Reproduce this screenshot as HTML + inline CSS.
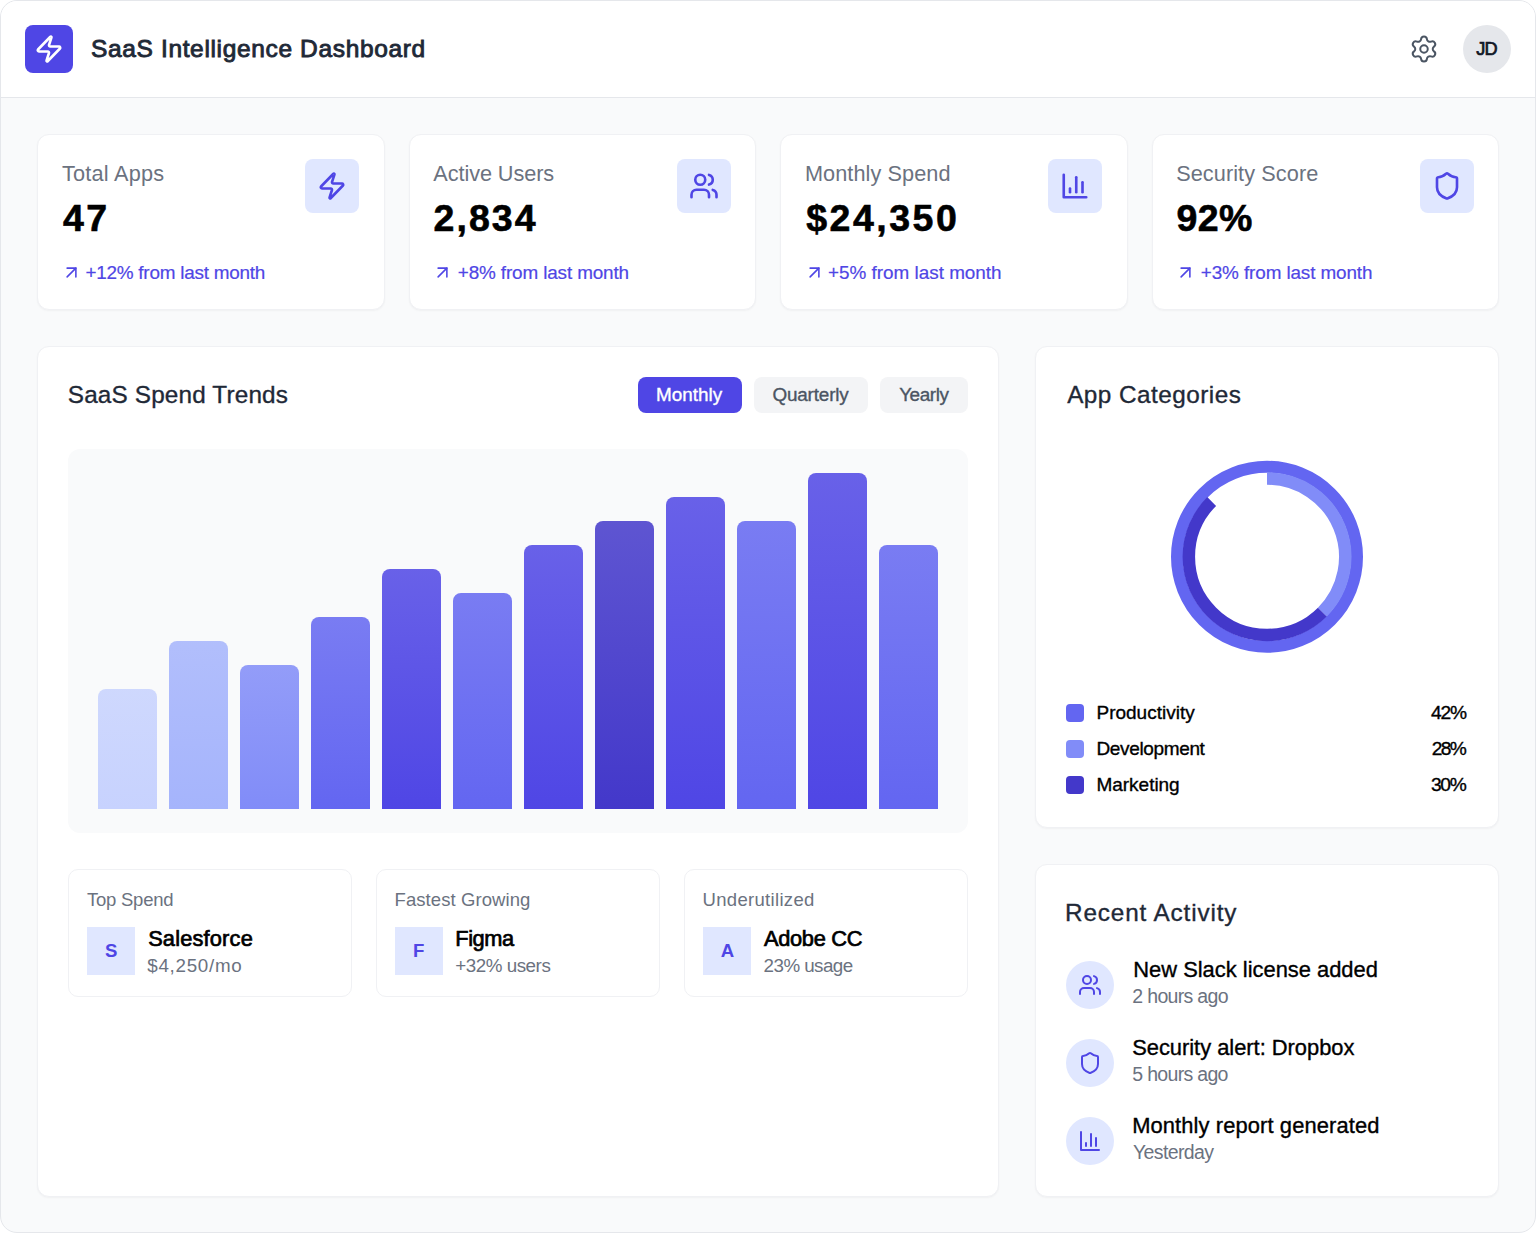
<!DOCTYPE html><html><head><meta charset="utf-8"><title>SaaS Intelligence Dashboard</title><style>
*{margin:0;padding:0;box-sizing:border-box}
html,body{width:1536px;height:1233px;overflow:hidden;background:#fff}
body{font-family:"Liberation Sans",sans-serif;position:relative}
.t{position:absolute;white-space:nowrap;line-height:1}
.bm{display:inline-block;width:0;height:0;vertical-align:baseline}
.b{position:absolute}
.card{position:absolute;background:#fff;border:1px solid #f0f1f4;border-radius:12px;box-shadow:0 1px 2px rgba(0,0,0,0.04)}
</style></head><body>
<div class="b" style="left:0;top:0;width:1536px;height:1233px;border:1px solid #e5e7eb;border-radius:17px;background:#f9fafb;overflow:hidden"><div class="b" style="left:0;top:0;width:1534px;height:97px;background:#fff;border-bottom:1px solid #e5e7eb"></div></div>
<div class="b" style="left:25px;top:25px;width:48px;height:48px;background:#4f46e5;border-radius:8px"></div>
<svg class="b" style="left:34.00px;top:34.00px;width:30px;height:30px" viewBox="0 0 24 24" fill="none" stroke="#fff" stroke-width="2.1" stroke-linecap="round" stroke-linejoin="round"><path d="M4 14a1 1 0 0 1-.78-1.63l9.9-10.2a.5.5 0 0 1 .86.46l-1.92 6.02A1 1 0 0 0 13 10h7a1 1 0 0 1 .78 1.63l-9.9 10.2a.5.5 0 0 1-.86-.46l1.92-6.02A1 1 0 0 0 11 14z"/></svg>
<svg class="b" style="left:1409.00px;top:34.00px;width:30px;height:30px" viewBox="0 0 24 24" fill="none" stroke="#4b5563" stroke-width="1.6" stroke-linecap="round" stroke-linejoin="round"><path d="M9.671 4.136a2.34 2.34 0 0 1 4.659 0 2.34 2.34 0 0 0 3.319 1.915 2.34 2.34 0 0 1 2.33 4.033 2.34 2.34 0 0 0 0 3.831 2.34 2.34 0 0 1-2.33 4.033 2.34 2.34 0 0 0-3.319 1.915 2.34 2.34 0 0 1-4.659 0 2.34 2.34 0 0 0-3.32-1.915 2.34 2.34 0 0 1-2.33-4.033 2.34 2.34 0 0 0 0-3.831A2.34 2.34 0 0 1 6.35 6.051a2.34 2.34 0 0 0 3.319-1.915"/><circle cx="12" cy="12" r="3"/></svg>
<div class="b" style="left:1463px;top:25px;width:48px;height:48px;background:#e5e7eb;border-radius:50%"></div>
<div class="card" style="left:37.00px;top:134px;width:347.5px;height:176px"></div>
<svg class="b" style="left:60.60px;top:262.30px;width:21px;height:21px" viewBox="0 0 24 24" fill="none" stroke="#4f46e5" stroke-width="1.8" stroke-linecap="round" stroke-linejoin="round"><path d="M7 7h10v10"/><path d="M7 17 17 7"/></svg>
<div class="b" style="left:305px;top:159px;width:54px;height:54px;background:#e0e7ff;border-radius:8px"></div>
<svg class="b" style="left:317.00px;top:171.00px;width:30px;height:30px" viewBox="0 0 24 24" fill="none" stroke="#4f46e5" stroke-width="2.1" stroke-linecap="round" stroke-linejoin="round"><path d="M4 14a1 1 0 0 1-.78-1.63l9.9-10.2a.5.5 0 0 1 .86.46l-1.92 6.02A1 1 0 0 0 13 10h7a1 1 0 0 1 .78 1.63l-9.9 10.2a.5.5 0 0 1-.86-.46l1.92-6.02A1 1 0 0 0 11 14z"/></svg>
<div class="card" style="left:408.50px;top:134px;width:347.5px;height:176px"></div>
<svg class="b" style="left:432.10px;top:262.30px;width:21px;height:21px" viewBox="0 0 24 24" fill="none" stroke="#4f46e5" stroke-width="1.8" stroke-linecap="round" stroke-linejoin="round"><path d="M7 7h10v10"/><path d="M7 17 17 7"/></svg>
<div class="b" style="left:677px;top:159px;width:54px;height:54px;background:#e0e7ff;border-radius:8px"></div>
<svg class="b" style="left:689.00px;top:171.00px;width:30px;height:30px" viewBox="0 0 24 24" fill="none" stroke="#4f46e5" stroke-width="2.1" stroke-linecap="round" stroke-linejoin="round"><path d="M16 21v-2a4 4 0 0 0-4-4H6a4 4 0 0 0-4 4v2"/><circle cx="9" cy="7" r="4"/><path d="M22 21v-2a4 4 0 0 0-3-3.87"/><path d="M16 3.13a4 4 0 0 1 0 7.75"/></svg>
<div class="card" style="left:780.00px;top:134px;width:347.5px;height:176px"></div>
<svg class="b" style="left:803.60px;top:262.30px;width:21px;height:21px" viewBox="0 0 24 24" fill="none" stroke="#4f46e5" stroke-width="1.8" stroke-linecap="round" stroke-linejoin="round"><path d="M7 7h10v10"/><path d="M7 17 17 7"/></svg>
<div class="b" style="left:1048px;top:159px;width:54px;height:54px;background:#e0e7ff;border-radius:8px"></div>
<svg class="b" style="left:1060.00px;top:171.00px;width:30px;height:30px" viewBox="0 0 24 24" fill="none" stroke="#4f46e5" stroke-width="2.1" stroke-linecap="round" stroke-linejoin="round"><path d="M3 3v18h18"/><path d="M18 17V9"/><path d="M13 17V5"/><path d="M8 17v-3"/></svg>
<div class="card" style="left:1151.50px;top:134px;width:347.5px;height:176px"></div>
<svg class="b" style="left:1175.10px;top:262.30px;width:21px;height:21px" viewBox="0 0 24 24" fill="none" stroke="#4f46e5" stroke-width="1.8" stroke-linecap="round" stroke-linejoin="round"><path d="M7 7h10v10"/><path d="M7 17 17 7"/></svg>
<div class="b" style="left:1420px;top:159px;width:54px;height:54px;background:#e0e7ff;border-radius:8px"></div>
<svg class="b" style="left:1432.00px;top:171.00px;width:30px;height:30px" viewBox="0 0 24 24" fill="none" stroke="#4f46e5" stroke-width="2.1" stroke-linecap="round" stroke-linejoin="round"><path d="M20 13c0 5-3.5 7.5-7.66 8.95a1 1 0 0 1-.67-.01C7.5 20.5 4 18 4 13V6a1 1 0 0 1 1-1c2 0 4.5-1.2 6.24-2.72a1.17 1.17 0 0 1 1.52 0C14.51 3.81 17 5 19 5a1 1 0 0 1 1 1z"/></svg>
<div class="card" style="left:37px;top:346px;width:962px;height:851px"></div>
<div class="b" style="left:638px;top:377px;width:104px;height:36px;background:#4f46e5;border-radius:8px"></div>
<div class="b" style="left:754px;top:377px;width:114px;height:36px;background:#f3f4f6;border-radius:8px"></div>
<div class="b" style="left:880px;top:377px;width:88px;height:36px;background:#f3f4f6;border-radius:8px"></div>
<div class="b" style="left:68px;top:449px;width:900px;height:384px;background:#f9fafb;border-radius:12px"></div>
<div class="b" style="left:98px;top:689px;width:59px;height:120px;background:linear-gradient(to bottom,rgba(199,210,254,0.85),#c7d2fe);border-radius:8px 8px 0 0"></div>
<div class="b" style="left:169px;top:641px;width:59px;height:168px;background:linear-gradient(to bottom,rgba(165,180,252,0.85),#a5b4fc);border-radius:8px 8px 0 0"></div>
<div class="b" style="left:240px;top:665px;width:59px;height:144px;background:linear-gradient(to bottom,rgba(129,140,248,0.85),#818cf8);border-radius:8px 8px 0 0"></div>
<div class="b" style="left:311px;top:617px;width:59px;height:192px;background:linear-gradient(to bottom,rgba(99,102,241,0.85),#6366f1);border-radius:8px 8px 0 0"></div>
<div class="b" style="left:382px;top:569px;width:59px;height:240px;background:linear-gradient(to bottom,rgba(79,70,229,0.85),#4f46e5);border-radius:8px 8px 0 0"></div>
<div class="b" style="left:453px;top:593px;width:59px;height:216px;background:linear-gradient(to bottom,rgba(99,102,241,0.85),#6366f1);border-radius:8px 8px 0 0"></div>
<div class="b" style="left:524px;top:545px;width:59px;height:264px;background:linear-gradient(to bottom,rgba(79,70,229,0.85),#4f46e5);border-radius:8px 8px 0 0"></div>
<div class="b" style="left:595px;top:521px;width:59px;height:288px;background:linear-gradient(to bottom,rgba(67,56,202,0.85),#4338ca);border-radius:8px 8px 0 0"></div>
<div class="b" style="left:666px;top:497px;width:59px;height:312px;background:linear-gradient(to bottom,rgba(79,70,229,0.85),#4f46e5);border-radius:8px 8px 0 0"></div>
<div class="b" style="left:737px;top:521px;width:59px;height:288px;background:linear-gradient(to bottom,rgba(99,102,241,0.85),#6366f1);border-radius:8px 8px 0 0"></div>
<div class="b" style="left:808px;top:473px;width:59px;height:336px;background:linear-gradient(to bottom,rgba(79,70,229,0.85),#4f46e5);border-radius:8px 8px 0 0"></div>
<div class="b" style="left:879px;top:545px;width:59px;height:264px;background:linear-gradient(to bottom,rgba(99,102,241,0.85),#6366f1);border-radius:8px 8px 0 0"></div>
<div class="b" style="left:68px;top:869px;width:284px;height:128px;border:1px solid #f0f1f4;border-radius:10px;background:#fff"></div>
<div class="b" style="left:87px;top:927px;width:48px;height:48px;background:#e0e7ff"></div>
<div class="b" style="left:376px;top:869px;width:284px;height:128px;border:1px solid #f0f1f4;border-radius:10px;background:#fff"></div>
<div class="b" style="left:395px;top:927px;width:48px;height:48px;background:#e0e7ff"></div>
<div class="b" style="left:684px;top:869px;width:284px;height:128px;border:1px solid #f0f1f4;border-radius:10px;background:#fff"></div>
<div class="b" style="left:703px;top:927px;width:48px;height:48px;background:#e0e7ff"></div>
<div class="card" style="left:1035px;top:346px;width:464px;height:482px"></div>
<svg class="b" style="left:0;top:0;width:1536px;height:1233px" viewBox="0 0 1536 1233"><circle cx="1267" cy="556.8" r="90" fill="none" stroke="#6366f1" stroke-width="12"/><path d="M1267.000 478.550A78.25 78.25 0 0 1 1322.331 612.131" fill="none" stroke="#818cf8" stroke-width="12.5"/><path d="M1322.331 612.131A78.25 78.25 0 0 1 1211.669 501.469" fill="none" stroke="#4338ca" stroke-width="12.5"/></svg>
<div class="b" style="left:1066px;top:704px;width:18px;height:18px;background:#6366f1;border-radius:4px"></div>
<div class="b" style="left:1066px;top:740px;width:18px;height:18px;background:#818cf8;border-radius:4px"></div>
<div class="b" style="left:1066px;top:776px;width:18px;height:18px;background:#4338ca;border-radius:4px"></div>
<div class="card" style="left:1035px;top:864px;width:464px;height:333px"></div>
<div class="b" style="left:1066px;top:961px;width:48px;height:48px;background:#e0e7ff;border-radius:50%"></div>
<svg class="b" style="left:1078.00px;top:973.00px;width:24px;height:24px" viewBox="0 0 24 24" fill="none" stroke="#4f46e5" stroke-width="2" stroke-linecap="round" stroke-linejoin="round"><path d="M16 21v-2a4 4 0 0 0-4-4H6a4 4 0 0 0-4 4v2"/><circle cx="9" cy="7" r="4"/><path d="M22 21v-2a4 4 0 0 0-3-3.87"/><path d="M16 3.13a4 4 0 0 1 0 7.75"/></svg>
<div class="b" style="left:1066px;top:1039px;width:48px;height:48px;background:#e0e7ff;border-radius:50%"></div>
<svg class="b" style="left:1078.00px;top:1051.00px;width:24px;height:24px" viewBox="0 0 24 24" fill="none" stroke="#4f46e5" stroke-width="2" stroke-linecap="round" stroke-linejoin="round"><path d="M20 13c0 5-3.5 7.5-7.66 8.95a1 1 0 0 1-.67-.01C7.5 20.5 4 18 4 13V6a1 1 0 0 1 1-1c2 0 4.5-1.2 6.24-2.72a1.17 1.17 0 0 1 1.52 0C14.51 3.81 17 5 19 5a1 1 0 0 1 1 1z"/></svg>
<div class="b" style="left:1066px;top:1117px;width:48px;height:48px;background:#e0e7ff;border-radius:50%"></div>
<svg class="b" style="left:1078.00px;top:1129.00px;width:24px;height:24px" viewBox="0 0 24 24" fill="none" stroke="#4f46e5" stroke-width="2" stroke-linecap="round" stroke-linejoin="round"><path d="M3 3v18h18"/><path d="M18 17V9"/><path d="M13 17V5"/><path d="M8 17v-3"/></svg>
<div class="t" id="t0" style="left:90.95px;top:37.01px;font-size:24.5px;font-weight:400;color:#1f2937;letter-spacing:0.649px;-webkit-text-stroke:0.9px #1f2937;">SaaS Intelligence Dashboard<i class="bm"></i></div>
<div class="t" id="t1" style="left:1476.35px;top:40.00px;font-size:18.2px;font-weight:400;color:#111827;letter-spacing:-0.994px;-webkit-text-stroke:0.7px #111827;">JD<i class="bm"></i></div>
<div class="t" id="t2" style="left:62.00px;top:163.00px;font-size:21.7px;font-weight:400;color:#6b7280;letter-spacing:0.220px;">Total Apps<i class="bm"></i></div>
<div class="t" id="t3" style="left:433.30px;top:163.00px;font-size:21.7px;font-weight:400;color:#6b7280;letter-spacing:-0.079px;">Active Users<i class="bm"></i></div>
<div class="t" id="t4" style="left:804.90px;top:163.00px;font-size:21.7px;font-weight:400;color:#6b7280;letter-spacing:0.082px;">Monthly Spend<i class="bm"></i></div>
<div class="t" id="t5" style="left:1176.13px;top:163.00px;font-size:21.7px;font-weight:400;color:#6b7280;letter-spacing:0.085px;">Security Score<i class="bm"></i></div>
<div class="t" id="t6" style="left:63.10px;top:200.00px;font-size:37.5px;font-weight:700;color:#000;letter-spacing:2.344px;-webkit-text-stroke:0.6px #000;">47<i class="bm"></i></div>
<div class="t" id="t7" style="left:433.60px;top:200.00px;font-size:37.5px;font-weight:700;color:#000;letter-spacing:2.029px;-webkit-text-stroke:0.6px #000;">2,834<i class="bm"></i></div>
<div class="t" id="t8" style="left:806.20px;top:200.00px;font-size:37.5px;font-weight:700;color:#000;letter-spacing:2.517px;-webkit-text-stroke:0.6px #000;">$24,350<i class="bm"></i></div>
<div class="t" id="t9" style="left:1176.60px;top:200.00px;font-size:37.5px;font-weight:700;color:#000;letter-spacing:0.294px;-webkit-text-stroke:0.6px #000;">92%<i class="bm"></i></div>
<div class="t" id="t10" style="left:85.40px;top:264.00px;font-size:18.9px;font-weight:400;color:#4f46e5;letter-spacing:-0.232px;-webkit-text-stroke:0.2px #4f46e5;">+12% from last month<i class="bm"></i></div>
<div class="t" id="t11" style="left:457.80px;top:264.00px;font-size:18.9px;font-weight:400;color:#4f46e5;letter-spacing:-0.136px;-webkit-text-stroke:0.2px #4f46e5;">+8% from last month<i class="bm"></i></div>
<div class="t" id="t12" style="left:828.06px;top:264.00px;font-size:18.9px;font-weight:400;color:#4f46e5;letter-spacing:-0.012px;-webkit-text-stroke:0.2px #4f46e5;">+5% from last month<i class="bm"></i></div>
<div class="t" id="t13" style="left:1200.80px;top:264.00px;font-size:18.9px;font-weight:400;color:#4f46e5;letter-spacing:-0.114px;-webkit-text-stroke:0.2px #4f46e5;">+3% from last month<i class="bm"></i></div>
<div class="t" id="t14" style="left:67.77px;top:383.10px;font-size:24.3px;font-weight:400;color:#1f2937;letter-spacing:0.168px;-webkit-text-stroke:0.35px #1f2937;">SaaS Spend Trends<i class="bm"></i></div>
<div class="t" id="t15" style="left:655.97px;top:386.10px;font-size:18.9px;font-weight:400;color:#fff;letter-spacing:0.008px;-webkit-text-stroke:0.35px #fff;">Monthly<i class="bm"></i></div>
<div class="t" id="t16" style="left:772.38px;top:386.10px;font-size:18.9px;font-weight:400;color:#4b5563;letter-spacing:-0.161px;-webkit-text-stroke:0.35px #4b5563;">Quarterly<i class="bm"></i></div>
<div class="t" id="t17" style="left:899.17px;top:386.10px;font-size:18.9px;font-weight:400;color:#4b5563;letter-spacing:-0.423px;-webkit-text-stroke:0.35px #4b5563;">Yearly<i class="bm"></i></div>
<div class="t" id="t18" style="left:86.90px;top:891.01px;font-size:18.5px;font-weight:400;color:#6b7280;letter-spacing:-0.222px;">Top Spend<i class="bm"></i></div>
<div class="t" id="t19" style="left:394.50px;top:891.01px;font-size:18.5px;font-weight:400;color:#6b7280;letter-spacing:0.086px;">Fastest Growing<i class="bm"></i></div>
<div class="t" id="t20" style="left:702.50px;top:891.01px;font-size:18.5px;font-weight:400;color:#6b7280;letter-spacing:0.318px;">Underutilized<i class="bm"></i></div>
<div class="t" id="t21" style="left:105.10px;top:942.10px;font-size:18.6px;font-weight:700;color:#4f46e5;letter-spacing:0.000px;">S<i class="bm"></i></div>
<div class="t" id="t22" style="left:412.90px;top:942.10px;font-size:18.6px;font-weight:700;color:#4f46e5;letter-spacing:0.000px;">F<i class="bm"></i></div>
<div class="t" id="t23" style="left:720.70px;top:942.10px;font-size:18.6px;font-weight:700;color:#4f46e5;letter-spacing:0.000px;">A<i class="bm"></i></div>
<div class="t" id="t24" style="left:148.15px;top:928.21px;font-size:21.8px;font-weight:400;color:#000;letter-spacing:0.182px;-webkit-text-stroke:0.7px #000;">Salesforce<i class="bm"></i></div>
<div class="t" id="t25" style="left:455.25px;top:928.21px;font-size:21.8px;font-weight:400;color:#000;letter-spacing:-0.434px;-webkit-text-stroke:0.7px #000;">Figma<i class="bm"></i></div>
<div class="t" id="t26" style="left:763.95px;top:928.21px;font-size:21.8px;font-weight:400;color:#000;letter-spacing:-0.304px;-webkit-text-stroke:0.7px #000;">Adobe CC<i class="bm"></i></div>
<div class="t" id="t27" style="left:147.30px;top:956.80px;font-size:18.8px;font-weight:400;color:#6b7280;letter-spacing:0.712px;">$4,250/mo<i class="bm"></i></div>
<div class="t" id="t28" style="left:455.20px;top:956.80px;font-size:18.8px;font-weight:400;color:#6b7280;letter-spacing:-0.457px;">+32% users<i class="bm"></i></div>
<div class="t" id="t29" style="left:763.60px;top:956.80px;font-size:18.8px;font-weight:400;color:#6b7280;letter-spacing:-0.554px;">23% usage<i class="bm"></i></div>
<div class="t" id="t30" style="left:1067.17px;top:383.40px;font-size:24.3px;font-weight:400;color:#1f2937;letter-spacing:0.478px;-webkit-text-stroke:0.35px #1f2937;">App Categories<i class="bm"></i></div>
<div class="t" id="t31" style="left:1096.47px;top:703.21px;font-size:19.0px;font-weight:400;color:#000;letter-spacing:0.004px;-webkit-text-stroke:0.35px #000;">Productivity<i class="bm"></i></div>
<div class="t" id="t32" style="left:1096.47px;top:739.21px;font-size:19.0px;font-weight:400;color:#000;letter-spacing:-0.352px;-webkit-text-stroke:0.35px #000;">Development<i class="bm"></i></div>
<div class="t" id="t33" style="left:1096.47px;top:775.21px;font-size:19.0px;font-weight:400;color:#000;letter-spacing:-0.026px;-webkit-text-stroke:0.35px #000;">Marketing<i class="bm"></i></div>
<div class="t" id="t34" style="left:1431.08px;top:703.31px;font-size:19.2px;font-weight:400;color:#000;letter-spacing:-1.271px;-webkit-text-stroke:0.35px #000;">42%<i class="bm"></i></div>
<div class="t" id="t35" style="left:1431.67px;top:739.31px;font-size:19.2px;font-weight:400;color:#000;letter-spacing:-1.596px;-webkit-text-stroke:0.35px #000;">28%<i class="bm"></i></div>
<div class="t" id="t36" style="left:1430.88px;top:775.31px;font-size:19.2px;font-weight:400;color:#000;letter-spacing:-1.196px;-webkit-text-stroke:0.35px #000;">30%<i class="bm"></i></div>
<div class="t" id="t37" style="left:1065.08px;top:901.00px;font-size:24.3px;font-weight:400;color:#1f2937;letter-spacing:0.855px;-webkit-text-stroke:0.35px #1f2937;">Recent Activity<i class="bm"></i></div>
<div class="t" id="t38" style="left:1133.27px;top:958.85px;font-size:21.9px;font-weight:400;color:#000;letter-spacing:0.002px;-webkit-text-stroke:0.35px #000;">New Slack license added<i class="bm"></i></div>
<div class="t" id="t39" style="left:1132.17px;top:1036.85px;font-size:21.9px;font-weight:400;color:#000;letter-spacing:-0.016px;-webkit-text-stroke:0.35px #000;">Security alert: Dropbox<i class="bm"></i></div>
<div class="t" id="t40" style="left:1132.17px;top:1114.85px;font-size:21.9px;font-weight:400;color:#000;letter-spacing:0.114px;-webkit-text-stroke:0.35px #000;">Monthly report generated<i class="bm"></i></div>
<div class="t" id="t41" style="left:1132.30px;top:986.90px;font-size:19.5px;font-weight:400;color:#6b7280;letter-spacing:-0.675px;">2 hours ago<i class="bm"></i></div>
<div class="t" id="t42" style="left:1132.30px;top:1064.90px;font-size:19.5px;font-weight:400;color:#6b7280;letter-spacing:-0.685px;">5 hours ago<i class="bm"></i></div>
<div class="t" id="t43" style="left:1133.00px;top:1142.90px;font-size:19.5px;font-weight:400;color:#6b7280;letter-spacing:-0.632px;">Yesterday<i class="bm"></i></div>
</body></html>
